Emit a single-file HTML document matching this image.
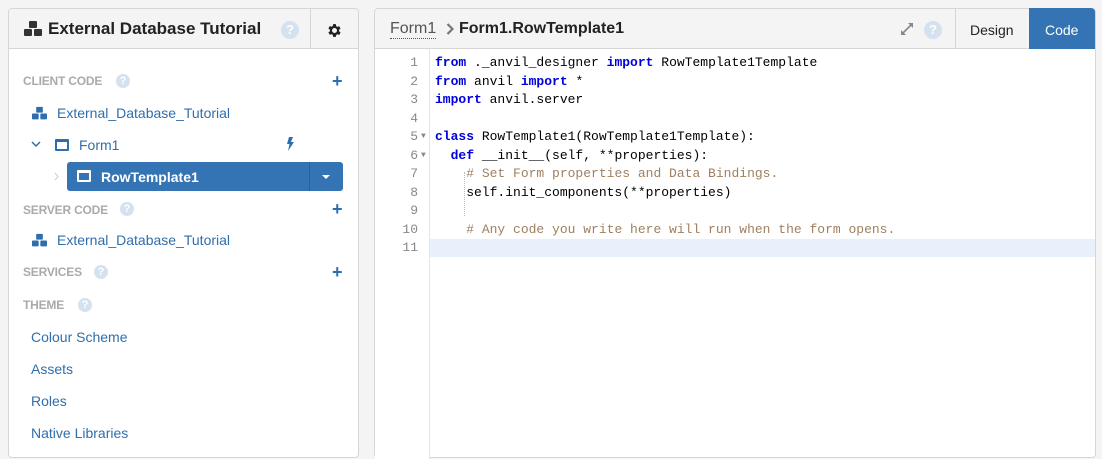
<!DOCTYPE html>
<html><head><style>
*{margin:0;padding:0;box-sizing:border-box}
body{width:1102px;height:451px;background:#f4f4f4;font-family:"Liberation Sans",sans-serif;position:relative;overflow:hidden}
.a{position:absolute;white-space:nowrap}
.panel{position:absolute;background:#fff;border:1px solid #d6d6d6;border-radius:4px}
.hdr{position:absolute;background:#f4f4f4;border-bottom:1px solid #d6d6d6}
.sec{font-size:12px;font-weight:bold;color:#aaa;letter-spacing:-0.2px}
.q{display:inline-block;width:14px;height:14px;border-radius:7px;background:#d4e2ef;color:#fff;font-size:11px;font-weight:bold;text-align:center;line-height:14px}
.lnk{font-size:14px;color:#2f6eac}
.plus{color:#2f6eac;font-size:18px;font-weight:bold;line-height:18px}
.code{font-family:"Liberation Mono",monospace;font-size:13px;color:#000;white-space:pre}
.ln{font-family:"Liberation Mono",monospace;font-size:13px;color:#888;text-align:right;width:44px;height:18.5px;position:relative}
.ar{position:absolute;left:47px;top:0;font-size:8px;color:#888}
.k{font-weight:bold;color:#0000dd}
.c{color:#a08060}
</style></head><body>
<div class="panel" style="left:8px;top:8px;width:351px;height:450px">
 <div class="hdr" style="left:0;top:0;width:349px;height:40px;border-radius:4px 4px 0 0"></div>
 <div class="a" style="left:301px;top:0;width:1px;height:40px;background:#d6d6d6"></div>
</div>
<svg class="a" style="left:23px;top:20px" width="20" height="18" viewBox="0 0 20 18"><g fill="#333"><rect x="6" y="1" width="8" height="7" rx="1"/><rect x="1" y="9" width="8" height="7" rx="1"/><rect x="11" y="9" width="8" height="7" rx="1"/></g></svg>
<div class="a" style="left:48px;top:19px;font-size:17px;font-weight:bold;color:#222">External Database Tutorial</div>
<div class="a q" style="left:281px;top:21px;width:18px;height:18px;border-radius:9px;line-height:18px;font-size:13px">?</div>
<svg class="a" style="left:326px;top:22px" width="17" height="17" viewBox="0 0 24 24"><path fill="#222" d="M19.4 13a7.5 7.5 0 000-2l2.1-1.6-2-3.5-2.5 1a7.6 7.6 0 00-1.7-1L15 3h-4l-.4 2.7a7.6 7.6 0 00-1.7 1l-2.5-1-2 3.5L6.6 11a7.5 7.5 0 000 2l-2.2 1.6 2 3.5 2.5-1a7.6 7.6 0 001.7 1L11 21h4l.4-2.7a7.6 7.6 0 001.7-1l2.5 1 2-3.5zM13 15.5a3.5 3.5 0 110-7 3.5 3.5 0 010 7z" transform="translate(-1 0)"/></svg>

<div class="a sec" style="left:23px;top:74px">CLIENT CODE</div>
<div class="a q" style="left:116px;top:74px">?</div>
<div class="a plus" style="left:332px;top:72px">+</div>
<svg class="a" style="left:31px;top:106px" width="17" height="15" viewBox="0 0 20 18"><g fill="#2f6eac"><rect x="6" y="1" width="8" height="7" rx="1"/><rect x="1" y="9" width="8" height="7" rx="1"/><rect x="11" y="9" width="8" height="7" rx="1"/></g></svg>
<div class="a lnk" style="left:57px;top:105px">External_Database_Tutorial</div>
<svg class="a" style="left:31px;top:141px" width="10" height="7" viewBox="0 0 10 7"><path d="M1 1l4 4 4-4" stroke="#2f6eac" stroke-width="1.5" fill="none"/></svg>
<div class="a" style="left:55px;top:139px;width:14px;height:12px;border:2px solid #2f6eac;border-top-width:3px;border-radius:1px"></div>
<div class="a lnk" style="left:79px;top:137px">Form1</div>
<svg class="a" style="left:286px;top:137px" width="8" height="14" viewBox="0 0 8 14"><path d="M3 0h4L5 5h3L2 14l1.5-7H1z" fill="#2f6eac"/></svg>
<svg class="a" style="left:54px;top:172px" width="5" height="9" viewBox="0 0 5 9"><path d="M1 1l3 3.5L1 8" stroke="#ccc" fill="none"/></svg>
<div class="a" style="left:67px;top:162px;width:276px;height:29px;background:#3474b4;border-radius:3px"></div>
<div class="a" style="left:309px;top:162px;width:1px;height:29px;background:#2a609a"></div>
<div class="a" style="left:77px;top:170px;width:14px;height:12px;border:2px solid #fff;border-top-width:3px;border-radius:1px"></div>
<div class="a" style="left:101px;top:169px;font-size:14px;color:#fff;font-weight:bold">RowTemplate1</div>
<div class="a" style="left:322px;top:175px;width:0;height:0;border-left:4px solid transparent;border-right:4px solid transparent;border-top:4px solid #fff"></div>

<div class="a sec" style="left:23px;top:203px">SERVER CODE</div>
<div class="a q" style="left:120px;top:202px">?</div>
<div class="a plus" style="left:332px;top:200px">+</div>
<svg class="a" style="left:31px;top:233px" width="17" height="15" viewBox="0 0 20 18"><g fill="#2f6eac"><rect x="6" y="1" width="8" height="7" rx="1"/><rect x="1" y="9" width="8" height="7" rx="1"/><rect x="11" y="9" width="8" height="7" rx="1"/></g></svg>
<div class="a lnk" style="left:57px;top:232px">External_Database_Tutorial</div>
<div class="a sec" style="left:23px;top:265px">SERVICES</div>
<div class="a q" style="left:94px;top:265px">?</div>
<div class="a plus" style="left:332px;top:263px">+</div>
<div class="a sec" style="left:23px;top:298px">THEME</div>
<div class="a q" style="left:78px;top:298px">?</div>
<div class="a lnk" style="left:31px;top:329px">Colour Scheme</div>
<div class="a lnk" style="left:31px;top:361px">Assets</div>
<div class="a lnk" style="left:31px;top:393px">Roles</div>
<div class="a lnk" style="left:31px;top:425px">Native Libraries</div>

<div class="panel" style="left:374px;top:8px;width:722px;height:450px">
 <div class="hdr" style="left:0;top:0;width:720px;height:40px;border-radius:4px 4px 0 0"></div>
 <div class="a" style="left:0;top:40px;width:55px;height:410px;background:#fff;border-right:1px solid #e4e4e4"></div>
 <div class="a" style="left:55px;top:230px;width:665px;height:18px;background:#e8f0fc"></div>
</div>
<div class="a" style="left:390px;top:20px;font-size:16px;color:#555;border-bottom:1px dotted #555;line-height:18px">Form1</div>
<svg class="a" style="left:446px;top:23px" width="8" height="12" viewBox="0 0 8 12"><path d="M1.5 1l5 5-5 5" stroke="#777" stroke-width="2.2" fill="none"/></svg>
<div class="a" style="left:459px;top:20px;font-size:16px;font-weight:bold;color:#222">Form1.RowTemplate1</div>
<svg class="a" style="left:900px;top:22px" width="14" height="14" viewBox="0 0 14 14"><g stroke="#888" stroke-width="1.6" fill="#888"><path d="M3 11l8-8"/></g><path d="M8 1h5v5zM1 8v5h5z" fill="#888"/></svg>
<div class="a q" style="left:924px;top:21px;width:18px;height:18px;border-radius:9px;line-height:18px;font-size:13px">?</div>
<div class="a" style="left:955px;top:8px;width:1px;height:40px;background:#d6d6d6"></div>
<div class="a" style="left:970px;top:22px;font-size:14px;color:#222">Design</div>
<div class="a" style="left:1029px;top:8px;width:66px;height:41px;background:#3474b4;border-radius:0 4px 0 0"></div>
<div class="a" style="left:1045px;top:22px;font-size:14px;color:#fff">Code</div>

<div class="a" style="left:464px;top:172px;height:44px;border-left:1px dotted #bbb"></div>
<div class="a" style="left:374px;top:54px;line-height:18.5px">
<div class="ln">1</div><div class="ln">2</div><div class="ln">3</div><div class="ln">4</div><div class="ln">5<span class="ar">▼</span></div><div class="ln">6<span class="ar">▼</span></div><div class="ln">7</div><div class="ln">8</div><div class="ln">9</div><div class="ln">10</div><div class="ln">11</div>
</div>
<div class="a code" style="left:435px;top:54px;line-height:18.5px"><span class="k">from</span> ._anvil_designer <span class="k">import</span> RowTemplate1Template
<span class="k">from</span> anvil <span class="k">import</span> *
<span class="k">import</span> anvil.server

<span class="k">class</span> RowTemplate1(RowTemplate1Template):
  <span class="k">def</span> __init__(self, **properties):
    <span class="c"># Set Form properties and Data Bindings.</span>
    self.init_components(**properties)

    <span class="c"># Any code you write here will run when the form opens.</span>
</div>
</body></html>
